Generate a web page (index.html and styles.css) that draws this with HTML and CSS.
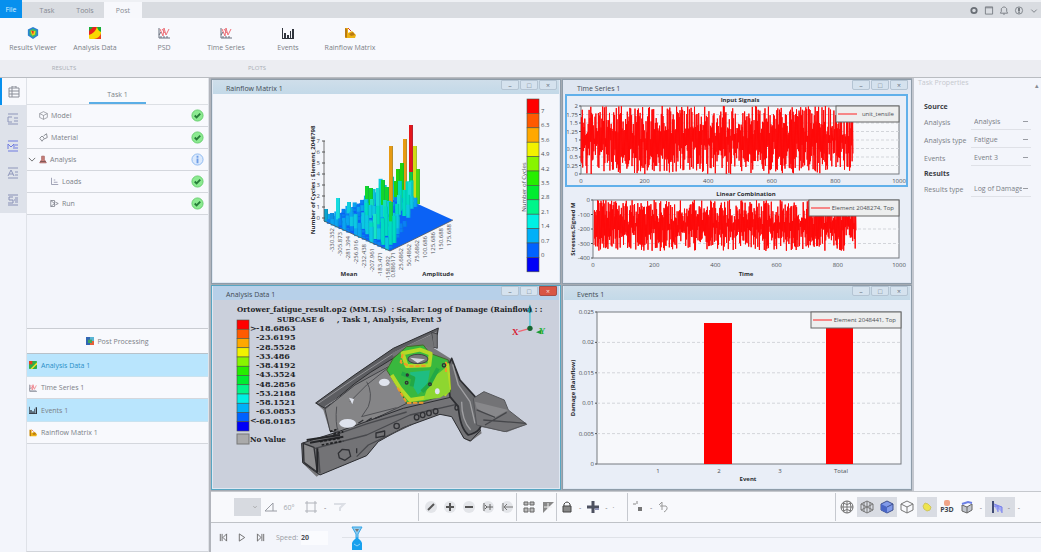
FILE: index.html
```html
<!DOCTYPE html>
<html lang="en">
    <head>
        <meta charset="utf-8">
        <title>Fatigue Post Processing</title>
        <link rel="stylesheet" href="styles.css">
        <script src="charts.js" defer></script>
    </head>
    <body>
        <!-- shared icons -->
        <svg width="0" height="0" class="defs">
            <symbol id="contour" viewBox="0 0 12 12"><rect width="12" height="12" rx="1" fill="#f9d900"/><path d="M0 0h8Q6 6 0 8z" fill="#e8211c"/><path d="M0 0h4L0 4z" fill="#18ad38"/><path d="M8 0h4v5q-3-1-4-5z" fill="#18ad38"/><path d="M12 6v6H5q6-1 7-6z" fill="#e8411c"/></symbol>
            <symbol id="contour-small" viewBox="0 0 12 12"><rect width="12" height="12" rx="1" fill="#2fae4a"/><path d="M0 0h5v5H0z" fill="#e8411c"/><path d="M12 2v3L5 12H2z" fill="#f4e02a"/></symbol>
            <symbol id="curve" viewBox="0 0 12 12" fill="none"><path d="M1 1v10h11M1 8l2-3M3 11v-2m3 2V9m3 2V9" stroke="#69707e"/><path d="M2 2l3 7 1-8 2 7 3-6M4 2l3 4" stroke="#ed7078"/></symbol>
            <symbol id="bars" viewBox="0 0 12 12"><path d="M0 1h1v10h11v1H0zM2 6h2v5H2zM5 8h2v3H5zM8 4h1v7H8zM10 2h2v9h-2z" fill="#30343c"/></symbol>
            <symbol id="matrix" viewBox="0 0 12 12"><path d="M1 1h3v5l4-2 4 4-1 3H1z" fill="#eeb314"/><path d="M1 1l2 1v9l-2-1zM5 7l4-2 2 3-4 1z" fill="#b97a12"/><path d="M4 1l3 3" stroke="#dc442c"/></symbol>
            <symbol id="ok" viewBox="0 0 14 14"><circle cx="7" cy="7" r="6" fill="#8cea91" stroke="#63cc6b"/><path d="M4 7l2 2 4-4" fill="none" stroke="#267c38" stroke-width="2"/></symbol>
            <symbol id="cube" viewBox="0 0 14 14"><path d="M7 1l6 3v6l-6 3-6-3V4zM1 4l6 3 6-3M7 7v6" fill="none" stroke="currentColor"/></symbol>
            <symbol id="list" viewBox="0 0 12 12"><path d="M1 1h10M1 11h10M8 5h3M8 8h3M1 9V4l3 3 3-3v5" fill="none" stroke="currentColor"/></symbol>
        </svg>

        <header>
            <nav class="tabs">
                <button class="file">File</button>
                <button>Task</button>
                <button>Tools</button>
                <button class="active">Post</button>
                <div class="window-tools">
                    <button aria-label="Settings"><svg viewBox="0 0 10 10"><circle cx="5" cy="5" r="3" fill="none" stroke="#6a6f76" stroke-width="2"/></svg></button>
                    <button aria-label="Layout"><svg viewBox="0 0 10 10"><path d="M1 1h8v8H1zM1 2h8" fill="none" stroke="#777c82"/></svg></button>
                    <button aria-label="Alerts"><svg viewBox="0 0 10 10"><path d="M1 8h8L8 6V3Q5-1 2 3v3zM4 9h2" fill="none" stroke="#777c82"/></svg></button>
                    <button aria-label="Help"><svg viewBox="0 0 10 10"><circle cx="5" cy="5" r="4" fill="none" stroke="#7b8087"/><path d="M5 2v4m0 1v1" stroke="#6b7077" stroke-width="2"/></svg></button>
                    <button aria-label="Collapse"><svg viewBox="0 0 10 10"><path d="M2 4l3 3 3-3" fill="none" stroke="#777c82"/></svg></button>
                </div>
            </nav>
            <div class="ribbon">
                <section class="ribbon-group">
                    <div class="ribbon-buttons">
                        <button><svg viewBox="0 0 14 14"><path d="M7 0l6 3v7l-6 4-6-4V3z" fill="#2a82d2"/><path d="M7 2l4 2v5l-4 3-4-3V4z" fill="#3dbd63"/><path d="M4 4l6 1-1 4-3 1z" fill="#f6d21b"/><path d="M5 4l3 1-1 4z" fill="#dc3023"/></svg>Results Viewer</button>
                        <button><svg><use href="#contour"/></svg>Analysis Data</button>
                    </div>
                    <h2>RESULTS</h2>
                </section>
                <section class="ribbon-group">
                    <div class="ribbon-buttons">
                        <button><svg><use href="#curve"/></svg>PSD</button>
                        <button><svg><use href="#curve"/></svg>Time Series</button>
                        <button><svg><use href="#bars"/></svg>Events</button>
                        <button><svg><use href="#matrix"/></svg>Rainflow Matrix</button>
                    </div>
                    <h2>PLOTS</h2>
                </section>
            </div>
        </header>

        <main>
            <aside class="rail">
                <button class="active" aria-label="Tasks"><svg viewBox="0 0 12 12"><path d="M1 2h10v9H1zM4 2V0h4v2M4 2v9M1 5h10M1 8h10" fill="none" stroke="#8a8e98"/></svg></button>
                <button aria-label="Loads list"><svg viewBox="0 0 12 12"><path d="M1 1h10M1 11h10M7 5h4M7 8h4M5 4H1v5h4" fill="none" stroke="#8e96ba"/></svg></button>
                <button aria-label="Material list"><svg class="blue"><use href="#list"/></svg></button>
                <button aria-label="Analysis list"><svg viewBox="0 0 12 12"><path d="M1 1h10M1 11h10M8 5h3M8 8h3M1 9l3-6 3 6M2 7h4" fill="none" stroke="#8e96ba"/></svg></button>
                <button aria-label="Report list"><svg viewBox="0 0 12 12"><path d="M1 1h10M1 11h10M8 4h3M8 8h3M6 3H2v3h4v3H1M7 6h4" fill="none" stroke="#8890b6"/></svg></button>
            </aside>

            <aside class="browser">
                <div class="task-tab"><button>Task 1</button></div>
                <ul class="tree">
                    <li><svg viewBox="0 0 14 14"><use href="#cube"/></svg><span>Model</span><svg class="state"><use href="#ok"/></svg></li>
                    <li><svg viewBox="0 0 12 12"><path d="M1 7l3-3 3 3-3 4zM6 4l4-3 1 5-4 2" fill="none" stroke="#6e7178"/></svg><span>Material</span><svg class="state"><use href="#ok"/></svg></li>
                    <li class="open"><svg viewBox="0 0 10 10"><path d="M1 3l4 4 4-4" fill="none" stroke="#555"/></svg><svg viewBox="0 0 12 12"><path d="M4 1h4v5l3 5H1l3-5z" fill="#c9817c" stroke="#9c504e"/><path d="M2 9h8" stroke="#5d4242"/></svg><span>Analysis</span><svg class="state" viewBox="0 0 14 14"><circle cx="7" cy="7" r="6" fill="#dbe9fc" stroke="#8ab8f0"/><path d="M7 3v2m0 1v5" stroke="#6d9ce6" stroke-width="2"/></svg></li>
                    <li class="child"><svg viewBox="0 0 12 12"><path d="M2 1v9h9M5 4h2M5 7h5" fill="none" stroke="#8588a0"/></svg><span>Loads</span><svg class="state"><use href="#ok"/></svg></li>
                    <li class="child"><svg viewBox="0 0 12 12"><path d="M1 2v8l5-4zM1 2h5v8H1M7 4l4 2-4 2" fill="none" stroke="#777984"/></svg><span>Run</span><svg class="state"><use href="#ok"/></svg></li>
                </ul>
                <h2 class="post-title"><svg viewBox="0 0 12 12"><rect width="12" height="12" fill="#3266b4"/><path d="M6 0h6v6H6z" fill="#59b4d4"/><path d="M6 6h6v6H6z" fill="#e5603b"/><path d="M3 4h6v5H3z" fill="#3fa75d"/></svg>Post Processing</h2>
                <ul class="post-list">
                    <li class="selected current"><svg><use href="#contour-small"/></svg>Analysis Data 1</li>
                    <li><svg><use href="#curve"/></svg>Time Series 1</li>
                    <li class="selected"><svg><use href="#bars"/></svg>Events 1</li>
                    <li><svg><use href="#matrix"/></svg>Rainflow Matrix 1</li>
                </ul>
            </aside>

            <div class="content">
                <div class="upper">
                    <div class="workspace">
                        <section class="win">
                            <header><h3>Rainflow Matrix 1</h3><button aria-label="Minimize">&#8211;</button><button aria-label="Maximize">&#9633;</button><button aria-label="Close">&#215;</button></header>
                            <svg class="plot" id="rainflow" viewBox="0 0 346 188"></svg>
                        </section>
                        <section class="win framed">
                            <header><h3>Time Series 1</h3><button aria-label="Minimize">&#8211;</button><button aria-label="Maximize">&#9633;</button><button aria-label="Close">&#215;</button></header>
                            <svg class="plot" id="series" viewBox="0 0 346 188"></svg>
                        </section>
                        <section class="win focus">
                            <header><h3>Analysis Data 1</h3><button aria-label="Minimize">&#8211;</button><button aria-label="Maximize">&#9633;</button><button class="close" aria-label="Close">&#215;</button></header>
                            <svg class="plot" id="analysis" viewBox="0 0 346 188">
                                <!-- shock tower body panel -->
                                <g transform="translate(-3 -15) scale(.3333)" stroke-linejoin="round">
                                    <path d="M317 354L470 245 560 190 685 128 683 145 672 190 720 220 742 290 790 340 820 320 880 345 890 375 952 418 890 442 810 425 815 445 780 470 760 460 725 390 690 385 580 430 500 470 470 510 340 560 320 575 278 535 275 475 350 460 380 445 360 440 340 375z" fill="#77777a"/>
                                    <path d="M317 354Q430 270 550 190L685 129 682 150Q520 230 435 295L345 370z" fill="#5c5d61" stroke="#2c2d30" stroke-width="3"/>
                                    <path d="M325 355Q440 275 555 202L680 141M345 365Q460 290 540 240L665 178" fill="none" stroke="#939397" stroke-width="3"/>
                                    <path d="M345 372L435 300 535 245 590 355 560 370 400 445 360 438z" fill="#858587" stroke="#404145" stroke-width="3"/>
                                    <path d="M380 365Q375 415 385 440M470 290Q490 325 475 365L455 395 560 368M535 248L470 300 420 350" fill="none" stroke="#4f5054" stroke-width="3"/>
                                    <path d="M665 142l17 5v43l-12-4z" fill="#737477" stroke="#424347" stroke-width="3"/>
                                    <path d="M545 205L665 150 672 186 600 188 550 215z" fill="#737477"/>
                                    <path d="M275 475L385 440 580 370 730 335 755 330 760 370 790 420 812 435 782 468 762 460 725 395 690 388 580 428 505 470 470 512 330 570 278 533z" fill="#737376" stroke="#2b2c30" stroke-width="3"/>
                                    <path d="M315 490L470 450 600 390 740 358M330 565L325 500M360 455l110-38 120-36M440 515l35-35 130-62" fill="none" stroke="#48494d" stroke-width="4"/>
                                    <path d="M280 475l32 12 10 75-40-30z" fill="#8c8c8e" stroke="#303135" stroke-width="4"/>
                                    <path d="M322 490v72M290 465l100-15M300 473l100-18" stroke="#242528" stroke-width="6" fill="none"/>
                                    <path d="M330 470l60-10M335 480l65-12M360 440l25-8M370 448l30-8" stroke="#1e1f21" stroke-width="5" stroke-dasharray="8 5"/>
                                    <path d="M725 220L750 285 800 340 815 405Q818 440 775 450 750 430 745 365L720 335 712 250z" fill="#68696c" stroke="#2d2e32" stroke-width="5"/>
                                    <path d="M728 238L745 300 780 350 795 415M755 350Q755 405 782 435" fill="none" stroke="#a0a0a3" stroke-width="4"/>
                                    <path d="M790 340L822 320 883 345 895 375 950 418 885 440 800 420z" fill="#737376" stroke="#55565a" stroke-width="3"/>
                                    <path d="M795 350L895 375 850 400 800 370z" fill="#88888b"/>
                                    <path d="M800 375l55 22M820 405L948 415M825 420l65-38" fill="none" stroke="#45464a" stroke-width="4"/>
                                    <path d="M590 185L640 180 660 205 715 225 722 320 690 335 640 350 590 355 565 310 530 255 550 220z" fill="#39b83e" stroke="#47652b" stroke-width="3"/>
                                    <path d="M545 270l25 40 30 35 45-7M712 235l5 76-15 20M578 205l12 38 68-2 4-35-32-12z" fill="none" stroke="#b4d928" stroke-width="12"/>
                                    <path d="M640 345l20-60 50-40 10 75-30 18z" fill="#8ed630"/>
                                    <path d="M563 308l28 46 50-1M578 207l-6 25 30 12 47-2M708 230v32" fill="none" stroke="#ef982a" stroke-width="6" stroke-dasharray="13 5"/>
                                    <path d="M600 262l60-6-8 45-28 28-18-30z" fill="#1fbd82"/>
                                    <path d="M575 265l35 14-5 25M684 250l-25 47-23 23" fill="none" stroke="#22a845" stroke-width="12"/>
                                    <ellipse cx="624" cy="222" rx="30" ry="14" fill="#77787a" stroke="#424346" stroke-width="3"/>
                                    <path d="M600 218l45 5-22 11z" fill="#d4d7df"/>
                                    <ellipse cx="523" cy="292" rx="16" ry="11" fill="#dfe3ed"/>
                                    <ellipse cx="413" cy="415" rx="25" ry="13" fill="#dfe3ed"/>
                                    <path d="M417 338l15 4-5 16z" fill="#dfe3ed"/>
                                    <ellipse cx="682" cy="319" rx="7" ry="9" fill="#dfe3ed"/>
                                    <g fill="none" stroke="#303135" stroke-width="4">
                                        <ellipse cx="620" cy="397" rx="7" ry="8"/><ellipse cx="638" cy="390" rx="7" ry="8"/><ellipse cx="657" cy="384" rx="7" ry="8"/><ellipse cx="677" cy="379" rx="7" ry="8"/><ellipse cx="740" cy="368" rx="5" ry="7"/>
                                        <circle cx="560" cy="423" r="8"/><circle cx="590" cy="293" r="4"/><circle cx="592" cy="270" r="3"/><circle cx="660" cy="298" r="4"/><circle cx="702" cy="241" r="5"/><path d="M498 444l26-6v15l-26 5zM385 505l12-12 20 2 5 19-17 12-17-7zM440 490v15M445 415l15-10m10 4l15-10m10 1l20-7"/>
                                    </g>
                                    <path d="M960 130V70" stroke="#50c6d8" stroke-width="4"/><path d="M952 82l8-24 8 24z" fill="#1d9aaa"/>
                                    <path d="M960 130l-35 10" stroke="#ef6673" stroke-width="4"/><circle cx="960" cy="130" r="8" fill="#17672e"/><path d="M978 142l16-8v14z" fill="#1b9c32"/>
                                </g>
                                <text class="axis-x" x="299" y="35">X</text>
                                <text class="axis-y" x="326" y="34">Y</text>
                                <text class="model" x="24" y="12">Ortower_fatigue_result.op2 (MM.T.S)  : Scalar: Log of Damage (Rainflow) : :</text>
                                <text class="model" x="64" y="22">SUBCASE 6</text>
                                <text class="model" x="124" y="22">, Task 1, Analysis, Event 3</text>
                            </svg>
                        </section>
                        <section class="win">
                            <header><h3>Events 1</h3><button aria-label="Minimize">&#8211;</button><button aria-label="Maximize">&#9633;</button><button aria-label="Close">&#215;</button></header>
                            <svg class="plot" id="events" viewBox="0 0 346 188"></svg>
                        </section>
                    </div>

                    <aside class="props">
                        <div class="props-title">Task Properties<button aria-label="Float panel">&#9652;</button></div>
                        <form>
                            <h3>Source</h3>
                            <div class="field"><label for="analysis-name">Analysis</label><select id="analysis-name"><option>Analysis</option></select></div>
                            <div class="field"><label for="analysis-type">Analysis type</label><select id="analysis-type"><option>Fatigue</option></select></div>
                            <div class="field"><label for="event">Events</label><select id="event"><option>Event 3</option></select></div>
                            <h3>Results</h3>
                            <div class="field"><label for="result-type">Results type</label><select id="result-type"><option>Log of Damage</option></select></div>
                        </form>
                    </aside>
                </div>

                <div class="toolbar">
                    <div class="tools select-tools">
                        <button class="picker" aria-label="Selector"><svg viewBox="0 0 10 10"><path d="M3 4l2 2 2-2" fill="none" stroke="#999"/></svg></button>
                        <button aria-label="Angle"><svg viewBox="0 0 14 14"><path d="M1 11L9 3v8zM9 11h4" fill="none" stroke="#999ca4"/></svg></button>
                        <input class="angle" aria-label="Feature angle" value="60°">
                        <button aria-label="Box"><svg viewBox="0 0 14 14"><path d="M3 1v12M11 1v12M1 3h12M1 11h12" fill="none" stroke="#b0b3ba"/></svg></button>
                        <span>-</span>
                        <button aria-label="Filter"><svg viewBox="0 0 14 14"><path d="M2 4h10L8 8v3" fill="none" stroke="#dcdfe5" stroke-width="2"/></svg></button>
                    </div>
                    <div class="tools display-tools">
                        <button aria-label="Pick"><svg viewBox="0 0 14 14"><circle cx="7" cy="7" r="6" fill="#e3e5e9"/><path d="M4 10l6-6" stroke="#555" stroke-width="2"/></svg></button>
                        <button aria-label="Add"><svg viewBox="0 0 14 14"><circle cx="7" cy="7" r="6" fill="#e3e5e9"/><path d="M3 7h8M7 3v8" stroke="#555" stroke-width="2"/></svg></button>
                        <button aria-label="Remove"><svg viewBox="0 0 14 14"><circle cx="7" cy="7" r="6" fill="#e3e5e9"/><path d="M3 7h8" stroke="#555" stroke-width="2"/></svg></button>
                        <button aria-label="Show"><svg viewBox="0 0 14 14"><circle cx="7" cy="7" r="6" fill="#e3e5e9"/><path d="M3 3v8M6 7h6M9 4v6M4 5l2 2-2 2" stroke="#666" fill="none"/></svg></button>
                        <button aria-label="Hide"><svg viewBox="0 0 14 14"><circle cx="7" cy="7" r="6" fill="#e3e5e9"/><path d="M3 3v8M5 7h8M7 4L4 7l3 3" stroke="#777" fill="none"/></svg></button>
                    </div>
                    <div class="tools grid-tools">
                        <button aria-label="Tile"><svg viewBox="0 0 14 14"><path d="M2 2h4v3H2zm6 0h4v3H8zM2 8h4v4H2zm6 0h4v4H8z" fill="#bbb" stroke="#666"/></svg></button>
                        <button aria-label="Split"><svg viewBox="0 0 14 14"><path d="M2 2h11L2 13z" fill="#888"/><path d="M3 7h8M7 3v7" stroke="#eee"/></svg></button>
                    </div>
                    <div class="tools lock-tools">
                        <button aria-label="Lock"><svg viewBox="0 0 14 14"><path d="M3 6h8v6H3z" fill="#888" stroke="#444"/><path d="M4 6V4q3-4 6 0v2" fill="none" stroke="#444"/></svg></button>
                        <span>-</span>
                        <button aria-label="Move"><svg viewBox="0 0 14 14"><path d="M1 7h12M7 1v12" stroke="#4d5160" stroke-width="3"/><path d="M9 9h4" stroke="#8d91b4" stroke-width="2"/></svg></button>
                        <span>-</span><span>·</span>
                    </div>
                    <div class="tools node-tools">
                        <button aria-label="Nodes"><svg viewBox="0 0 14 14"><path d="M2 4h3M6 1v3" stroke="#888"/><path d="M7 7h4v4H7z" fill="#777"/></svg></button>
                        <span>-</span>
                        <button aria-label="Back"><svg viewBox="0 0 14 14"><path d="M2 5l3-3v8M3 6h6q3 3-2 6" fill="none" stroke="#999"/></svg></button>
                    </div>
                    <div class="tools view-tools">
                        <button aria-label="Mesh sphere"><svg viewBox="0 0 14 14"><circle cx="7" cy="7" r="6" fill="none" stroke="#666"/><path d="M7 1v12M1 7h12M3 3q4 3 8 0M3 11q4-3 8 0M4 2q-2 5 0 10M10 2q2 5 0 10" fill="none" stroke="#777"/></svg></button>
                        <button class="on" aria-label="Wireframe"><svg viewBox="0 0 14 14"><path d="M7 1l6 3v6l-6 3-6-3V4zM1 4l6 3 6-3M7 7v6M7 1v6M1 10l6-3 6 3M4 2v10M10 2v10" fill="none" stroke="#777"/></svg></button>
                        <button class="on" aria-label="Shaded"><svg viewBox="0 0 14 14"><path d="M7 1l6 3v6l-6 3-6-3V4z" fill="#819ae9" stroke="#3f508f"/><path d="M1 4l6 3v6l-6-3z" fill="#4965c5"/><path d="M7 7l6-3" stroke="#3f508f"/></svg></button>
                        <button aria-label="Outline"><svg><use href="#cube"/></svg></button>
                        <button class="on" aria-label="Mesh"><svg viewBox="0 0 14 14"><path d="M5 3l3 1 3 3-1 3-3 1-3-2-1-3z" fill="#eee44c" stroke="#d0c65c"/></svg></button>
                        <button class="p3d"><i></i>P3D</button>
                        <button aria-label="Section"><svg viewBox="0 0 14 14"><path d="M2 5l5 2v6l-5-2zM7 7l5-3v6l-5 3" fill="#c3c7cf" stroke="#666"/><path d="M2 4l6-2 4 1" fill="none" stroke="#6c80e6" stroke-width="2"/></svg></button>
                        <span>-</span>
                        <button class="on wide" aria-label="Clip"><svg viewBox="0 0 14 14"><path d="M3 1v12" stroke="#414c77" stroke-width="2"/><path d="M4 4l8 3v6M4 6h4v6" fill="#a3aaf5" stroke="#767fea"/></svg><span>-</span></button>
                        <span>-</span>
                    </div>
                </div>

                <div class="timeline">
                    <button aria-label="First"><svg viewBox="0 0 10 10"><path d="M2 1v8M4 1v8M9 1L5 5l4 4z" fill="none" stroke="#666"/></svg></button>
                    <button aria-label="Play"><svg viewBox="0 0 10 10"><path d="M2 1l6 4-6 4z" fill="none" stroke="#666"/></svg></button>
                    <button aria-label="Last"><svg viewBox="0 0 10 10"><path d="M8 1v8M1 1l4 4-4 4zM6 1v8" fill="none" stroke="#666"/></svg></button>
                    <label for="speed">Speed:</label>
                    <input id="speed" value="20">
                    <div class="track">
                        <svg class="marker" viewBox="0 0 12 24"><path d="M1 1h10L7 8v4H5V8z" fill="#8ccbf0" stroke="#35a5e6"/><path d="M4 3h4L6 6z" fill="#777"/><path d="M2 15l4-4 4 4 1 2v7H1v-7z" fill="#18a1ee"/><path d="M3 18l3 2 3-2" fill="none" stroke="#8ed3fa"/></svg>
                    </div>
                </div>
            </div>
        </main>
    </body>
</html>
```

FILE: styles.css
```css
* {
    box-sizing: border-box;
}
body {
    margin: 0;
    height: 100vh;
    display: flex;
    flex-direction: column;
    overflow: hidden;
    background: #f3f5fb;
    color: #7b7f87;
    font-family: "Open Sans", Arial, sans-serif;
    font-size: 7px;
}
button, input, select {
    margin: 0;
    padding: 0;
    border: 0;
    background: none;
    color: inherit;
    font: inherit;
}
h2, h3, ul {
    margin: 0;
    padding: 0;
    font-size: 7px;
    font-weight: normal;
    list-style: none;
}
svg {
    display: block;
    flex: none;
}
.defs {
    position: absolute;
}

/* top tabs */
.tabs {
    display: flex;
    height: 18px;
    background: #d9dce1;
    border-top: 2px solid #eef0f4;
}
.tabs > button {
    width: 38px;
    color: #858991;
}
.tabs .file {
    width: 22px;
    margin: -2px 6px 0 0;
    background: #0790ee;
    color: #d8efff;
}
.tabs .active {
    background: #f7f8fc;
}
.window-tools {
    display: flex;
    align-items: center;
    gap: 5px;
    margin-left: auto;
    padding-right: 2px;
}
.window-tools svg {
    width: 10px;
    height: 9px;
}

/* ribbon */
.ribbon {
    display: flex;
    gap: 7px;
    height: 60px;
    padding-left: 2px;
    background: linear-gradient(#f8f9fd 42px, #ecedf2 42px);
    border-bottom: 1px solid #b9bcc1;
}
.ribbon-buttons {
    display: flex;
    height: 42px;
}
.ribbon-buttons button {
    display: flex;
    flex-direction: column;
    align-items: center;
    gap: 4px;
    width: 62px;
    padding-top: 9px;
    white-space: nowrap;
}
.ribbon-buttons svg {
    width: 12px;
    height: 12px;
}
.ribbon h2 {
    color: #aaadb5;
    font-size: 6px;
    line-height: 17px;
    text-align: center;
}

main {
    display: flex;
    flex: 1;
    min-height: 0;
}

/* left side */
.rail {
    width: 26px;
}
.rail button {
    display: flex;
    align-items: center;
    justify-content: center;
    width: 26px;
    height: 27px;
    background: #dee2ea;
}
.rail .active {
    background: #f8f9fd;
    border-left: 2px solid #0790ee;
}
.rail svg {
    width: 12px;
    height: 12px;
}
.blue {
    color: #6f7be0;
}
.browser {
    display: flex;
    flex-direction: column;
    width: 183px;
    border-left: 1px solid #dfe2e8;
    border-right: 1px solid #dfe2e8;
    border-bottom: 1px solid #d2d5db;
}
.task-tab {
    height: 27px;
    background: #f9fafd;
    border-bottom: 1px solid #dde0e5;
    text-align: center;
}
.task-tab button {
    width: 57px;
    height: 26px;
    padding-top: 8px;
    border-bottom: 2px solid #5baee6;
}
.tree {
    flex: 1;
}
.tree li {
    display: flex;
    align-items: center;
    gap: 3px;
    height: 22px;
    padding: 0 4px 0 12px;
    background: #f8f9fd;
    border-bottom: 1px solid #d4d7dd;
}
.tree .open {
    padding-left: 1px;
}
.tree .child {
    padding-left: 23px;
}
.tree svg {
    width: 9px;
    height: 9px;
}
.tree .open svg {
    width: 8px;
}
.tree .state, .tree .open .state {
    width: 13px;
    height: 13px;
    margin-left: auto;
}
.post-title {
    display: flex;
    align-items: center;
    justify-content: center;
    gap: 3px;
    height: 26px;
    background: #f8f9fd;
    border-top: 1px solid #c9ccd2;
    border-bottom: 1px solid #b8c2ca;
}
.post-title svg, .post-list svg {
    width: 8px;
    height: 8px;
}
.post-list {
    height: 197px;
}
.post-list li {
    display: flex;
    align-items: center;
    gap: 4px;
    height: 22px;
    padding-left: 2px;
    background: #f8f9fd;
    border-bottom: 1px solid #d4d7dd;
}
.post-list .selected {
    height: 23px;
    background: #b9e5fd;
    border-color: #c9e3f0;
}
.post-list .current {
    color: #298fc8;
}

/* plot windows */
.content {
    display: flex;
    flex: 1;
    flex-direction: column;
    min-width: 0;
    border-left: 2px solid #b2b5bc;
}
.upper {
    display: flex;
    flex: 1;
    min-height: 0;
}
.workspace {
    display: grid;
    grid-template: 1fr 1fr / 1fr 1fr;
    flex: 1;
    gap: 1px;
    min-width: 0;
    padding: 1px 0;
    background: #a4aab2;
}
.win {
    display: flex;
    flex-direction: column;
    min-width: 0;
    min-height: 0;
    padding: 0 1px 1px;
    background: #dfe8f3;
    border: 1px solid #8e9ca9;
}
.win header {
    display: flex;
    gap: 1px;
    height: 14px;
    padding-right: 2px;
    background: linear-gradient(#cfdeea, #c3d9e8);
}
.win h3 {
    flex: 1;
    padding-left: 13px;
    color: #424b54;
    line-height: 17px;
}
.win header button {
    width: 18px;
    height: 10px;
    border: 1px solid #b4c4d3;
    border-radius: 0 0 2px 2px;
    background: #d5e2ee;
    color: #69737f;
    line-height: 7px;
}
.win header .close {
    background: #d95645;
    border-color: #a84e47;
    color: #f5dcd9;
}
.framed, .framed header {
    background: #dfe6f1;
}
.focus {
    border-color: #58a6c2;
}
.focus header {
    background: #b7d0e9;
}
.focus .plot {
    background: #cbd0dc;
}
.plot {
    flex: 1;
    width: 100%;
    min-height: 0;
    background: #f4f6fb;
}
.framed .plot, #events {
    background: #e9eef7;
}
.plot text {
    fill: #4b4e54;
    font-size: 6px;
}
.plot .bold {
    fill: #2c2e33;
    font-weight: bold;
}
.plot .model {
    fill: #222427;
    font: bold 8px "DejaVu Serif Condensed", "DejaVu Serif", serif;
    white-space: pre;
}
.plot .value {
    fill: #25272b;
    font: bold 8px "DejaVu Serif", serif;
}
.plot .axis-x {
    fill: #d71932;
    font: bold 9px "Liberation Serif", serif;
}
.plot .axis-y {
    fill: #28b23a;
    font: bold 9px "Liberation Serif", serif;
}

/* properties */
.props {
    width: 129px;
    border-left: 2px solid #c3c7cf;
}
.props-title {
    display: flex;
    justify-content: space-between;
    padding: 0 2px 0 4px;
    color: #c5c8ce;
    line-height: 10px;
}
.props-title button {
    padding-top: 3px;
    color: #888b92;
}
.props form {
    padding: 9px 10px 0;
}
.props h3 {
    color: #3b3e45;
    font-weight: bold;
    line-height: 13px;
}
.field {
    display: flex;
    align-items: center;
    height: 18px;
}
.field label {
    width: 47px;
}
.field select {
    flex: 1;
    min-width: 0;
    height: 15px;
    padding: 0 9px 0 3px;
    border-bottom: 1px solid #dfe1e7;
    border-radius: 0;
    appearance: none;
    background: linear-gradient(#999ca3, #999ca3) right 3px center / 5px 1px no-repeat;
}

/* bottom bars */
.toolbar {
    display: flex;
    height: 32px;
    padding: 1px 0;
    background: #f8f9fc;
    border-top: 1px solid #c5c8cd;
    border-bottom: 1px solid #bfc2c7;
}
.tools {
    display: flex;
    align-items: center;
    gap: 5px;
    padding-left: 5px;
    border-right: 1px solid #c6c9cf;
    color: #777;
}
.tools svg {
    width: 14px;
    height: 14px;
}
.tools button {
    display: flex;
    align-items: center;
    justify-content: center;
}
.select-tools {
    gap: 3px;
    width: 208px;
    padding-left: 23px;
}
.tools .picker {
    width: 27px;
    height: 18px;
    padding-left: 15px;
    background: #d7dae0;
}
.picker svg {
    width: 8px;
}
.select-tools span {
    padding: 0 3px;
}
.angle {
    width: 16px;
    margin-right: 4px;
    color: #a5a8af;
    text-align: center;
}
.display-tools {
    width: 98px;
}
.grid-tools {
    width: 40px;
}
.lock-tools {
    width: 71px;
}
.lock-tools, .node-tools {
    padding-left: 3px;
}
.node-tools {
    flex: 1;
}
.view-tools {
    gap: 0;
    width: 205px;
    padding-left: 1px;
    border-right: 0;
}
.view-tools button {
    width: 20px;
    height: 20px;
}
.view-tools > span {
    width: 8px;
    text-align: center;
}
.tools .on {
    background: #d9dce3;
}
.view-tools .wide {
    width: 30px;
    gap: 4px;
}
.view-tools .p3d {
    flex-direction: column;
    color: #40444c;
    font-weight: bold;
    line-height: 8px;
}
.p3d i {
    width: 6px;
    height: 6px;
    border-radius: 2px;
    background: #f1a487;
}
.timeline {
    display: flex;
    align-items: center;
    height: 29px;
    padding-left: 3px;
}
.timeline button {
    width: 19px;
    padding-left: 4px;
}
.timeline button svg {
    width: 10px;
    height: 9px;
}
.timeline label {
    width: 25px;
    margin-left: 5px;
    color: #9b9ea5;
}
.timeline input {
    width: 27px;
    height: 14px;
    background: #fafbfe;
    color: #4d5058;
    font-weight: bold;
}
.track {
    flex: 1;
    height: 24px;
    margin-left: 14px;
    padding-left: 9px;
    background: linear-gradient(#dfe2e8, #dfe2e8) 0 center / 100% 1px no-repeat;
}
.marker {
    width: 12px;
    height: 24px;
}
```

FILE: charts.js
```js
const COLORS = ['#ff0000', '#ff5a00', '#ffa800', '#f2f200', '#88f500', '#26ee00', '#00ed30', '#00f58a', '#00f0e4', '#00b0f8', '#0062ff', '#0000f8'];

function add(parent, name, attrs, text) {
    const node = document.createElementNS('http://www.w3.org/2000/svg', name);
    for (const key in attrs) node.setAttribute(key, attrs[key]);
    if (text !== undefined) node.textContent = text;
    parent.appendChild(node);
    return node;
}

function label(svg, x, y, text, cls, anchor, rotate) {
    const attrs = { x: x, y: y, class: cls || '', 'text-anchor': anchor || 'middle' };
    if (rotate) attrs.transform = `rotate(-90 ${x} ${y})`;
    add(svg, 'text', attrs, text);
}

let seed = 37;
function random() {
    seed = (seed * 16807) % 2147483647;
    return seed / 2147483647;
}

function scale(svg, x, y, width, cell) {
    COLORS.forEach((c, i) => add(svg, 'rect', { x: x, y: y + i * cell, width: width, height: cell, fill: c, stroke: '#4c5245', 'stroke-width': 0.6 }));
}

// axes with horizontal grid lines
function plotArea(svg, x, y, w, h, ticks) {
    add(svg, 'rect', { x: x, y: y, width: w, height: h, fill: '#f7f8fb', stroke: '#777a80' });
    ticks.forEach((t, i) => {
        const ty = y + h * i / (ticks.length - 1);
        add(svg, 'path', { d: `M${x - 2} ${ty}h2`, stroke: '#555' });
        if (i && i < ticks.length - 1) add(svg, 'path', { d: `M${x} ${ty}h${w}`, stroke: '#d3d5da', 'stroke-dasharray': '3 2' });
        label(svg, x - 3, ty + 2, t, '', 'end');
    });
}

function legend(svg, x, y, w, h, text) {
    add(svg, 'rect', { x: x, y: y, width: w, height: h, fill: '#edeeee', stroke: '#666' });
    add(svg, 'path', { d: `M${x + 2} ${y + h / 2}h19`, stroke: '#ff2020', 'stroke-width': 1 });
    label(svg, x + w - 5, y + h / 2 + 2, text, '', 'end');
}

function signal(svg, x, y, w, h) {
    let d = '';
    const n = 640;
    for (let i = 0; i <= n; i++) {
        const far = Math.pow(random(), 0.7) * 0.5;
        const v = i % 2 ? 0.5 - far : 0.5 + far;
        d += (i ? 'L' : 'M') + (x + w * i / n).toFixed(1) + ' ' + (y + h * v).toFixed(1);
    }
    add(svg, 'path', { d: d, fill: 'none', stroke: '#ff0808', 'stroke-width': 1, 'stroke-linejoin': 'bevel' });
}

function drawSeries() {
    const svg = document.getElementById('series');
    plotArea(svg, 17, 12, 318, 68, ['2', '1.75', '1.5', '1.25', '1', '0.75', '0.5', '0.25', '0']);
    signal(svg, 17, 12, 272, 68);
    legend(svg, 272, 12, 63, 16, 'unit_tensile');
    label(svg, 176, 8, 'Input Signals', 'bold');
    [0, 200, 400, 600, 800, 1000].forEach((t, i) => {
        label(svg, 17 + i * 63.6, 89, t);
        label(svg, 29 + i * 61.2, 173, t);
    });
    add(svg, 'rect', { x: 2, y: 1, width: 341, height: 91, fill: 'none', stroke: '#61b0ea', 'stroke-width': 2 });

    plotArea(svg, 29, 106, 306, 58, ['0', '-100', '-200', '-300', '-400']);
    signal(svg, 30, 106, 262, 51);
    legend(svg, 245, 106, 90, 16, 'Element 2048274, Top');
    label(svg, 182, 102, 'Linear Combination', 'bold');
    label(svg, 182, 182, 'Time', 'bold');
    label(svg, 11, 135, 'Stresses,Signed M', 'bold', 'middle', true);
}

function drawEvents() {
    const svg = document.getElementById('events');
    plotArea(svg, 33, 12, 304, 152, ['0.025', '0.02', '0.015', '0.01', '0.005', '0']);
    add(svg, 'rect', { x: 140, y: 23, width: 28, height: 141, fill: '#ff0000' });
    add(svg, 'rect', { x: 262, y: 23, width: 27, height: 141, fill: '#ff0000' });
    legend(svg, 247, 12, 90, 16, 'Element 2048441, Top');
    ['1', '2', '3', 'Total'].forEach((t, i) => label(svg, 94 + i * 61, 173, t));
    label(svg, 184, 181, 'Event', 'bold');
    label(svg, 11, 88, 'Damage (Rainflow)', 'bold', 'middle', true);
}

function drawRainflow() {
    const svg = document.getElementById('rainflow');
    add(svg, 'path', { d: 'M111 127L174 96 240 126 177 157z', fill: '#0b62f5' });
    const bars = [];
    for (let i = 0; i < 17; i++) {
        for (let j = 0; j < 17; j++) {
            const u = i / 17, v = j / 17;
            if (u > 1 - 0.55 * v || random() < 0.12) continue;
            const r = random();
            const h = 1 + r * r * (5 + 22 * Math.min(1, u + v * 0.6));
            const c = h > 17 ? '#00dcc0' : h > 10 ? '#0cc8e2' : h > 5 ? '#0aa4f0' : '#0a80f4';
            bars.push([112 + 66 * u + 63 * v, 128 + 30 * u - 31 * v, h, c]);
        }
    }
    // x, base, height, colour of the peaks
    bars.push(
        [113, 128, 13, '#0aa4cf'], [119, 130, 11, '#0a90e4'], [125, 127, 23, '#15dce0'], [136, 123, 15, '#10cddd'],
        [154, 116, 24, '#12d52c'], [158, 117, 23, '#12d52c'], [170, 115, 29, '#12d52c'], [174, 116, 23, '#12d52c'],
        [178, 114, 62, '#e79a12'], [192, 102, 57, '#e79a12'], [185, 106, 31, '#1ed30e'], [189, 104, 35, '#1ed30e'],
        [183, 107, 20, '#1ed30e'], [198, 97, 66, '#e4161b'], [198, 109, 31, '#12c844'], [202, 106, 54, '#d0dc13'],
        [205, 110, 35, '#4ed513'], [197, 112, 24, '#18dbd5'], [178, 138, 30, '#12d648'], [162, 145, 25, '#18e5c4'],
        [165, 112, 18, '#18dbd5'], [159, 122, 17, '#14dfb8'], [172, 126, 20, '#14dfb8'], [186, 121, 20, '#18dbd5']
    );
    bars.sort((a, b) => a[1] - b[1]);
    bars.forEach(b => {
        add(svg, 'rect', { x: b[0] - 2, y: b[1] - b[2], width: 4, height: b[2], fill: b[3] });
        add(svg, 'rect', { x: b[0] + 1, y: b[1] - b[2], width: 1, height: b[2], fill: '#045a8a', opacity: 0.2 });
    });
    add(svg, 'path', { d: 'M111 47V127L177 157 240 126', fill: 'none', stroke: '#555', 'stroke-width': 0.8 });
    for (let i = 0; i < 8; i++) {
        add(svg, 'path', { d: `M109 ${47 + i * 11}h3`, stroke: '#555' });
        label(svg, 107, 49 + i * 11, 7 - i, '', 'end');
    }
    ['-330.352', '-305.873', '-281.394', '-256.916', '-232.438', '-207.961', '-183.471', '-158.992'].forEach((t, i) => {
        label(svg, 121 + i * 8, 134 + i * 4, t, '', 'end', true);
    });
    ['0.886171', '25.6862', '50.4862', '75.6862', '100.686', '125.686', '150.688', '175.688'].forEach((t, i) => {
        label(svg, 182 + i * 8, 158 - i * 4, t, '', 'end', true);
    });
    label(svg, 102, 86, 'Number of Cycles : Element_2048798', 'bold', 'middle', true);
    label(svg, 136, 182, 'Mean', 'bold');
    label(svg, 225, 182, 'Amplitude', 'bold');
    scale(svg, 314, 5, 12, 14.4);
    ['7', '6.3', '5.6', '4.9', '4.2', '3.5', '2.8', '2.1', '1.4', '0.7', '0'].forEach((t, i) => label(svg, 328, 19 + i * 14.4, t, '', 'start'));
    label(svg, 313, 93, 'Number of Cycles', '', 'middle', true);
}

function drawAnalysis() {
    const svg = document.getElementById('analysis');
    scale(svg, 24, 20, 12, 9.25);
    ['-18.6863', '-23.6195', '-28.5528', '-33.486', '-38.4192', '-43.3524', '-48.2856', '-53.2188', '-58.1521', '-63.0853', '-68.0185'].forEach((t, i) => {
        label(svg, 43, 31 + i * 9.25, t, 'value', 'start');
    });
    label(svg, 37, 31, '>', 'value', 'start');
    label(svg, 37, 123, '<', 'value', 'start');
    add(svg, 'rect', { x: 24, y: 134, width: 12, height: 10, fill: '#aaa', stroke: '#777' });
    label(svg, 37, 142, 'No Value', 'model', 'start');
}

drawRainflow();
drawSeries();
drawEvents();
drawAnalysis();
```
